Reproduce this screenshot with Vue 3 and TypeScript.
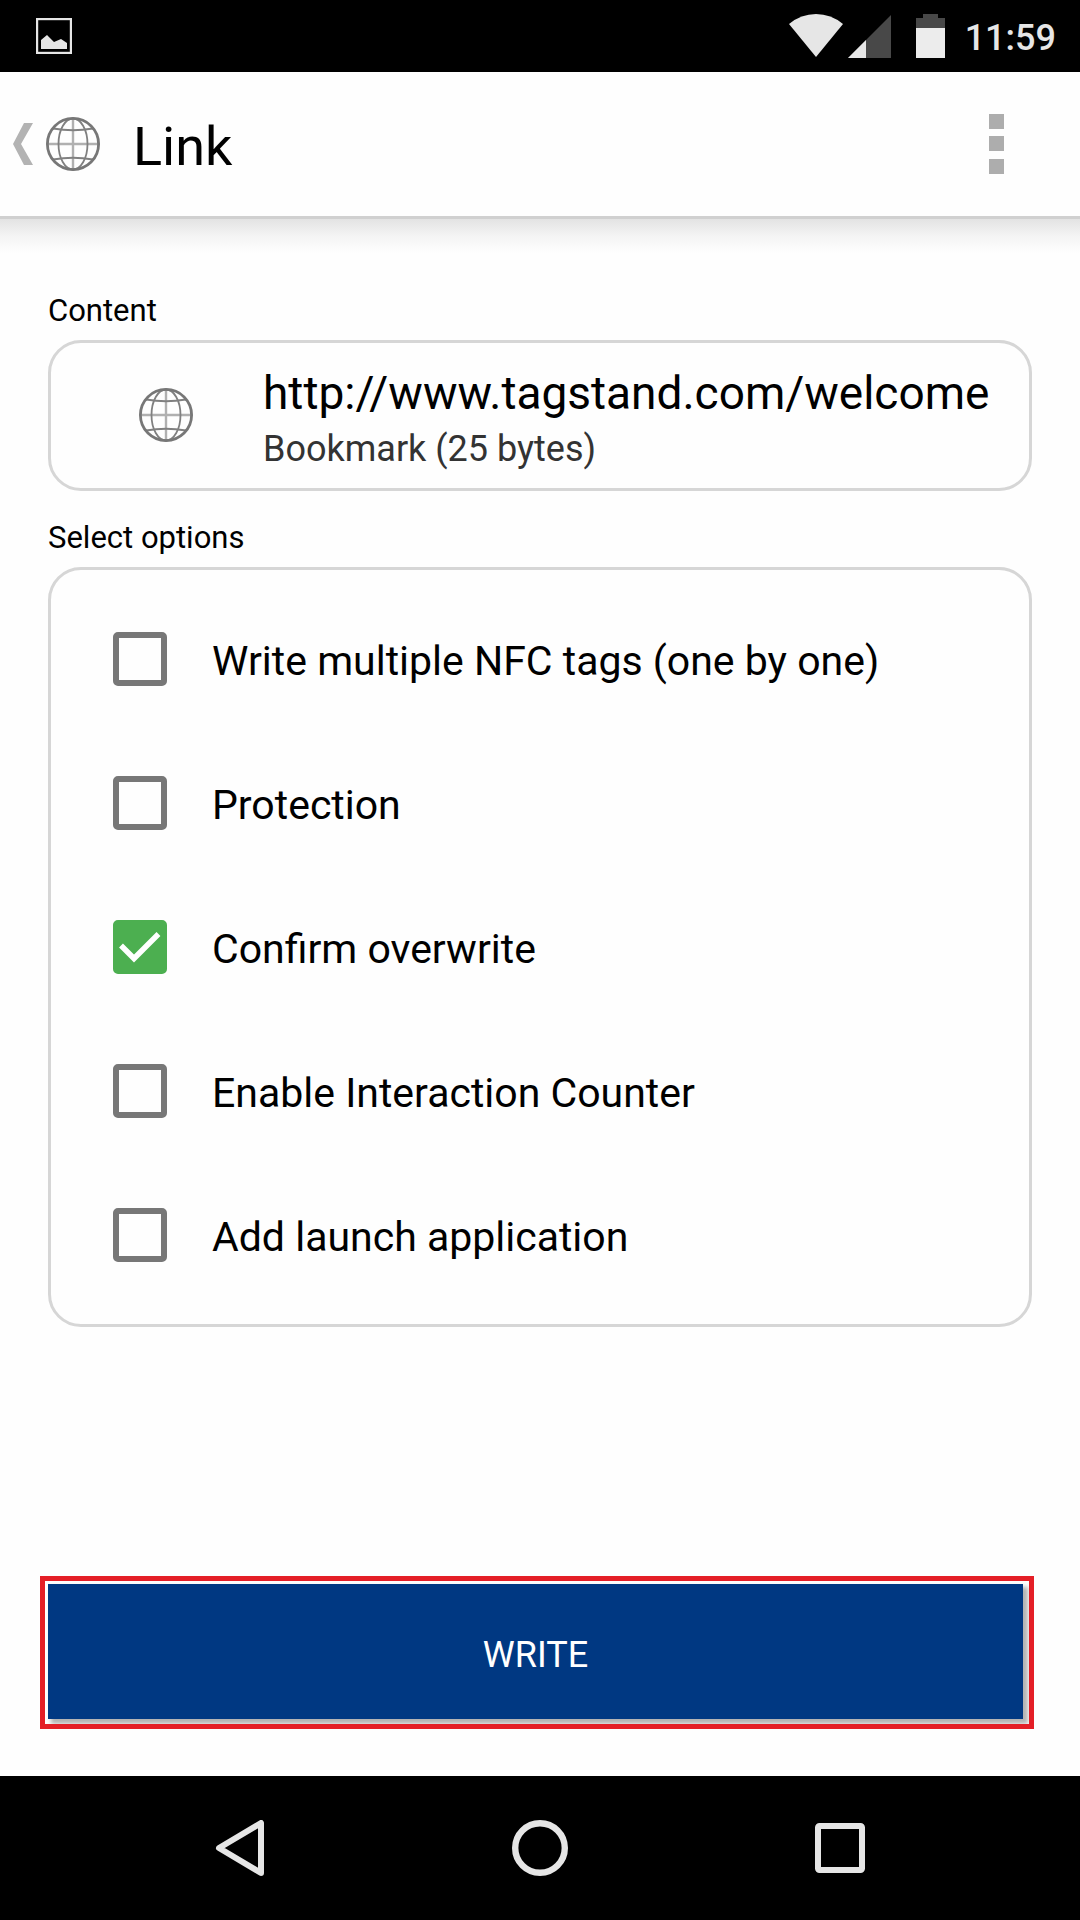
<script setup lang="ts">
import { ref } from 'vue'

interface WriteOption {
  id: string
  label: string
  checked: boolean
}

const options = ref<WriteOption[]>([
  { id: 'multiple', label: 'Write multiple NFC tags (one by one)', checked: false },
  { id: 'protection', label: 'Protection', checked: false },
  { id: 'confirm', label: 'Confirm overwrite', checked: true },
  { id: 'counter', label: 'Enable Interaction Counter', checked: false },
  { id: 'launch', label: 'Add launch application', checked: false },
])
</script>

<template>
  <div class="screen">
    <svg class="symbols" width="0" height="0" aria-hidden="true">
      <symbol id="globe" viewBox="0 0 54 54">
        <g fill="none" stroke="#808080">
          <path d="M27 2V52M2 27H52" stroke="#b0b0b0" stroke-width="2.4" />
          <ellipse cx="27" cy="27" rx="14.5" ry="25.5" stroke-width="1.8" />
          <path d="M7 11.5Q27 15 47 11.5M7 42.5Q27 39 47 42.5" stroke-width="2" />
          <circle cx="27" cy="27" r="25.6" stroke="#777" stroke-width="2.8" />
        </g>
      </symbol>
    </svg>

    <div class="status">
      <svg class="photo" width="36" height="36" viewBox="0 0 36 36">
        <rect x="1" y="1" width="34" height="34" fill="none" stroke="#e6e6e6" stroke-width="2.4" />
        <path d="M5 31V22L11 17L18 24L25 21L31 25V31Z" fill="#e6e6e6" />
      </svg>
      <svg width="54" height="44" viewBox="0 0 54 44">
        <path d="M0 10Q12 0 27 0T54 10L27 43Z" fill="#e6e6e6" />
      </svg>
      <svg class="signal" width="43" height="43" viewBox="0 0 43 43">
        <path d="M43 0V43H0Z" fill="#484848" />
        <path d="M18 25V43H0Z" fill="#e6e6e6" />
      </svg>
      <svg class="battery" width="29" height="44" viewBox="0 0 29 44">
        <path d="M7 0H22V4H29V15H0V4H7Z" fill="#484848" />
        <path d="M0 14H29V44H0Z" fill="#ececec" />
      </svg>
      <span class="clock">11:59</span>
    </div>

    <header class="bar">
      <button class="back" type="button" aria-label="Back">
        <svg width="20" height="42" viewBox="0 0 20 42">
          <path d="M11 0H20L8 21L20 42H11L0 21Z" fill="#b3b3b3" />
        </svg>
        <svg width="54" height="54"><use href="#globe" /></svg>
      </button>
      <h1 class="title">Link</h1>
      <button class="more" type="button" aria-label="More options">
        <svg width="15" height="60" viewBox="0 0 15 60">
          <path d="M0 0H15V15H0ZM0 22H15V37H0ZM0 45H15V60H0Z" fill="#adadad" />
        </svg>
      </button>
    </header>

    <main class="content">
      <h2 class="label">Content</h2>
      <section class="card record">
        <svg class="record-icon" width="54" height="54"><use href="#globe" /></svg>
        <div class="record-text">
          <div class="url">http://www.tagstand.com/welcome</div>
          <div class="kind">Bookmark (25 bytes)</div>
        </div>
      </section>

      <h2 class="label">Select options</h2>
      <section class="card options">
        <label v-for="option in options" :key="option.id" class="option" :for="option.id">
          <span class="tick">
            <input :id="option.id" v-model="option.checked" type="checkbox" />
            <svg v-if="option.checked" width="54" height="54" viewBox="0 0 54 54">
              <path d="M8 25.500L21 38.500L45.500 14" fill="none" stroke="#fff" stroke-width="5.500" />
            </svg>
          </span>
          <span class="option-text">{{ option.label }}</span>
        </label>
      </section>

      <div class="action">
        <button class="write" type="button">WRITE</button>
      </div>
    </main>

    <nav class="nav">
      <button type="button" aria-label="Back">
        <svg width="56" height="56" viewBox="0 0 56 56">
          <path d="M49 3V53L7 28Z" fill="none" stroke="#e6e6e6" stroke-width="6" stroke-linejoin="round" />
        </svg>
      </button>
      <button type="button" aria-label="Home">
        <svg width="56" height="56" viewBox="0 0 56 56">
          <circle cx="28" cy="28" r="24.800" fill="none" stroke="#e6e6e6" stroke-width="6.400" />
        </svg>
      </button>
      <button type="button" aria-label="Recent apps">
        <svg width="56" height="56" viewBox="0 0 56 56">
          <rect x="6" y="6" width="44" height="44" rx="1.500" fill="none" stroke="#e6e6e6" stroke-width="6" />
        </svg>
      </button>
    </nav>
  </div>
</template>

<style>
body {
  background: #fefefe;
}
</style>

<style scoped>
.screen {
  display: flex;
  flex-direction: column;
  min-height: 100vh;
  font-family: Roboto, 'Liberation Sans', sans-serif;
  color: #000;
}

.screen * {
  box-sizing: border-box;
}

.symbols {
  position: absolute;
}

svg {
  display: block;
  flex: none;
}

button {
  padding: 0;
  border: 0;
  background: none;
  font-family: inherit;
  cursor: pointer;
}

.status {
  display: flex;
  align-items: center;
  height: 72px;
  padding: 0 24px 0 36px;
  background: #000;
}

.photo {
  margin-right: auto;
}

.signal {
  margin-left: 5px;
}

.battery {
  margin: 0 20px 0 25px;
}

.clock {
  padding-top: 4px;
  font-size: 36px;
  font-weight: 500;
  line-height: 42px;
  color: #e6e6e6;
}

.bar {
  display: flex;
  align-items: center;
  height: 144px;
  padding: 0 76px 0 13px;
}

.back {
  display: flex;
  align-items: center;
  gap: 13px;
}

.title {
  flex: 1;
  margin: 0 0 0 33px;
  padding-top: 6px;
  font-size: 54px;
  font-weight: 400;
  line-height: 64px;
}

.content {
  flex: 1;
  display: flex;
  flex-direction: column;
  padding: 77px 48px 47px;
  background: linear-gradient(#d0d0d0 0 3px, #e3e3e3 3px, #f4f4f4 20px, #fefefe 37px);
}

.label {
  margin: 0 0 11px;
  font-size: 31px;
  font-weight: 400;
  line-height: 36px;
}

.card {
  border: 3px solid #d6d6d6;
  border-radius: 33px;
}

.record {
  display: flex;
  align-items: center;
  gap: 70px;
  margin-bottom: 29px;
  padding: 17px 32px 18px 88px;
}

.record-text {
  padding-top: 7px;
  min-width: 0;
}

.url {
  font-size: 46px;
  line-height: 52px;
}

.kind {
  margin-top: 9px;
  font-size: 36px;
  line-height: 42px;
  color: #333;
}

.options {
  padding: 17px 62px;
}

.option {
  display: flex;
  align-items: center;
  gap: 45px;
  height: 144px;
  cursor: pointer;
}

.tick {
  display: grid;
  flex: none;
}

.tick input,
.tick svg {
  grid-area: 1 / 1;
}

.tick svg {
  pointer-events: none;
}

.tick input {
  appearance: none;
  width: 54px;
  height: 54px;
  margin: 0;
  border: 6px solid #777;
  border-radius: 5px;
}

.tick input:checked {
  border-color: #4caf50;
  background: #4caf50;
}

.option-text {
  padding-top: 4px;
  font-size: 41px;
  line-height: 48px;
}

.action {
  margin: auto -2px 0 -8px;
  padding: 3px 6px 5px 3px;
  border: 5px solid #e41e26;
  overflow: hidden;
}

.write {
  display: block;
  width: 100%;
  height: 135px;
  padding-top: 7px;
  background: #003882;
  box-shadow: 4px 4px 4px 1px #b4b4b4;
  font-size: 36px;
  line-height: 42px;
  color: #fff;
}

.nav {
  display: flex;
  height: 144px;
  padding: 0 90px;
  background: #000;
}

.nav button {
  flex: 1;
  display: grid;
  place-items: center;
}
</style>
